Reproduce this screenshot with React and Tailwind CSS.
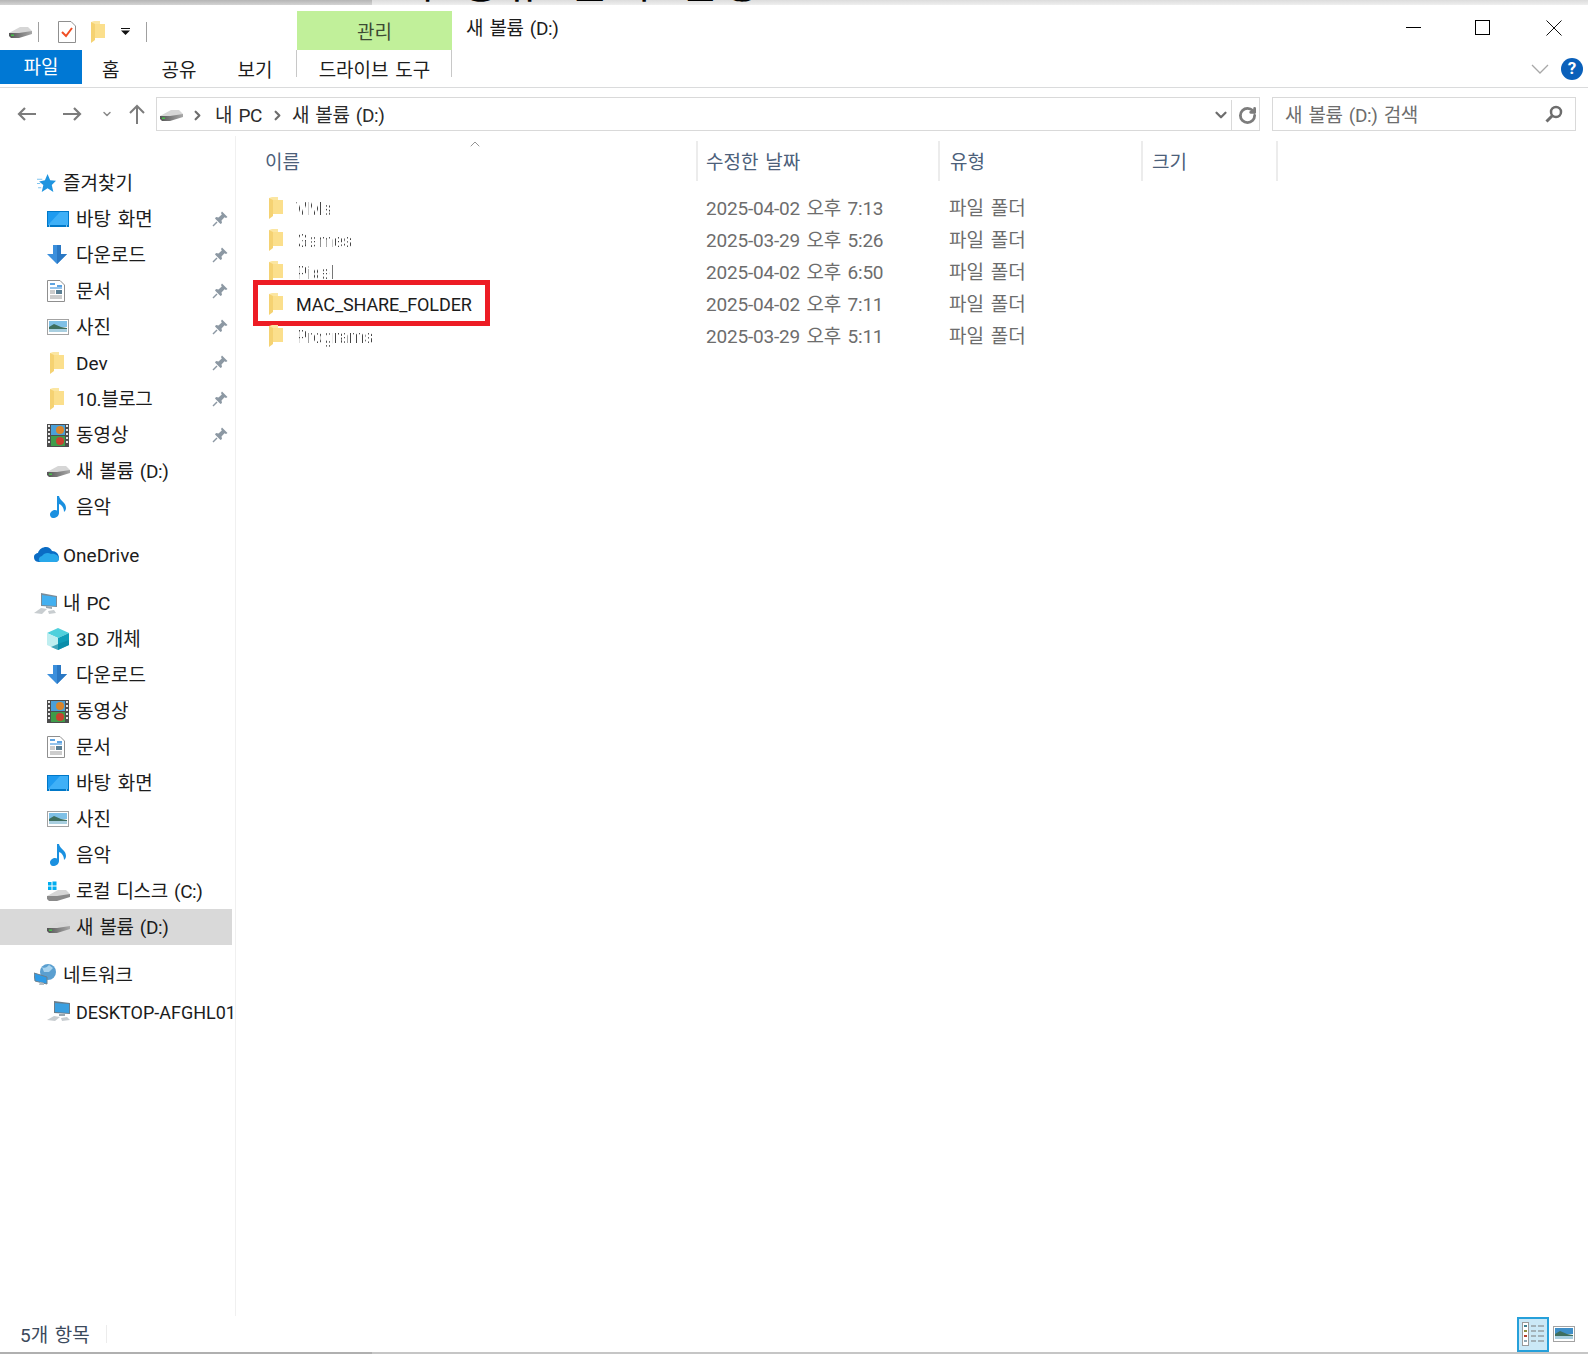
import { ChevronDown, ChevronRight, ChevronUp, RotateCw } from "lucide-react";

const HddIcon = () => (
  <svg width="23" height="12" viewBox="0 0 23 12" className="shrink-0">
    <defs>
      <linearGradient id="hddFront" x1="0" x2="1" y1="0" y2="0">
        <stop offset="0" stopColor="#555" />
        <stop offset="1" stopColor="#a8a8a8" />
      </linearGradient>
    </defs>
    <path d="M0 7 L11 1 H19 L23 5 V6 L10 8 H0 Z" fill="#d6d6d6" />
    <path d="M0 7 H10 L23 5 V8 L10 12 H2 L0 10 Z" fill="url(#hddFront)" />
    <path d="M2 8.5 h3 v1.5 h-3 z" fill="#46c24a" />
  </svg>
);

const FolderIcon = () => (
  <svg width="14" height="22" viewBox="0 0 14 22" className="shrink-0">
    <path d="M0 1 L3 0 H9 V3 H14 V17 H4 L0 17 Z" fill="#fbe6a2" />
    <path d="M0 1 L4 3 V19 L0 22 Z" fill="#f5d272" />
    <path d="M4 3 H14 V17 H4 Z" fill="#fbdf8c" />
  </svg>
);

const DesktopIcon = () => (
  <svg width="22" height="16" viewBox="0 0 22 16" className="shrink-0">
    <rect x="0" y="0" width="22" height="16" fill="#0078c8" />
    <rect x="1" y="1" width="20" height="13" fill="#1e9bf0" />
    <path d="M1 14 L13 1 H21 V14 Z" fill="#3fb0f7" />
    <path d="M2 15 h1 M19 15 h1" stroke="#fff" />
  </svg>
);

const DownloadIcon = () => (
  <svg width="20" height="20" viewBox="0 0 20 20" className="shrink-0">
    <path d="M6 0 H14 V9 H20 L10 19 L0 9 H6 Z" fill="#3b8fdc" />
    <path d="M10 0 H14 V9 H20 L10 19 Z" fill="#2a78c4" />
  </svg>
);

const DocIcon = () => (
  <svg width="18" height="22" viewBox="0 0 18 22" className="shrink-0">
    <path d="M0.5 0.5 H13 L17.5 5 V21.5 H0.5 Z" fill="#fff" stroke="#8f8f8f" />
    <path d="M3 4 h5 M10 6 h5" stroke="#2b87d8" strokeWidth="1.5" />
    <path d="M3 8 h12" stroke="#2b87d8" />
    <rect x="9" y="10" width="6" height="4" fill="#5a7f94" />
    <path d="M3 11 h5 M3 13 h5 M3 16 h12 M3 18 h12" stroke="#9a9a9a" />
  </svg>
);

const PicturesIcon = () => (
  <svg width="22" height="16" viewBox="0 0 22 16" className="shrink-0">
    <rect x="0.5" y="0.5" width="21" height="15" fill="#fff" stroke="#a3a3a3" />
    <rect x="2" y="2" width="18" height="6" fill="#7fc0e6" />
    <path d="M2 8 L7 5 L14 8 L20 9 V13 H2 Z" fill="#3f6f5f" />
    <rect x="2" y="10" width="18" height="3" fill="#a9cfe0" />
  </svg>
);

const VideoIcon = () => (
  <svg width="22" height="23" viewBox="0 0 22 23" className="shrink-0">
    <rect width="22" height="23" fill="#4d4d4d" />
    <rect x="4" y="1" width="14" height="10" fill="#4aa0d8" />
    <rect x="4" y="12" width="14" height="10" fill="#3f9c4a" />
    <circle cx="13" cy="6" r="4" fill="#d9852b" />
    <circle cx="13" cy="17" r="4" fill="#c9402f" />
    <path d="M1 2 h2 M1 6 h2 M1 10 h2 M1 14 h2 M1 18 h2 M19 2 h2 M19 6 h2 M19 10 h2 M19 14 h2 M19 18 h2" stroke="#e8e8e8" strokeWidth="2" />
  </svg>
);

const MusicIcon = () => (
  <svg width="17" height="22" viewBox="0 0 17 22" className="shrink-0">
    <path d="M7 0 H9 C10 5 16 6 16 12 C16 14 15 15 14 16 C14 12 12 9 9 8 V17 C9 20 6 22 3 22 C1 22 0 20 0 18.5 C0 16 3 14 5 14 C6 14 6.5 14.2 7 14.5 Z" fill="#1a90e0" />
  </svg>
);

const StarIcon = () => (
  <svg width="19" height="19" viewBox="0 0 18 18" className="shrink-0">
    <path d="M10 0 L12.5 6 L18 6.5 L14 10.5 L15.5 17 L10 13.5 L4.5 17 L6 10.5 L2 7 L7.5 6 Z" fill="#1f95e0" />
    <path d="M0 5 H5 M0 9 H3 M1 13 H4" stroke="#7fc4ef" />
  </svg>
);

const CloudIcon = () => (
  <svg width="25" height="16" viewBox="0 0 25 16" className="shrink-0">
    <path d="M5 15 C1 15 0 12 0 10 C0 7 3 6 4 6 C5 2 9 0 12 0 C15 0 17 2 18 4 C22 4 25 7 25 11 C25 14 23 15 21 15 Z" fill="#0a6cc4" />
    <path d="M7 15 C4 15 4 10 8 9 C10 6 14 5 17 7 C21 6 25 9 25 12 C25 14 23 15 21 15 Z" fill="#28a8ea" />
  </svg>
);

const PcIcon = () => (
  <svg width="24" height="21" viewBox="0 0 24 21" className="shrink-0">
    <path d="M7 0 L23 3 V14 L7 13 Z" fill="#7a8c99" />
    <path d="M8 2 L22 4 V13 L8 12 Z" fill="#43b0f0" />
    <path d="M12 13 L18 14 V16 L12 15 Z" fill="#9aa7b0" />
    <path d="M0 20 L7 15 L13 16 L8 21 Z" fill="#c8cdd0" />
    <path d="M14 18 L20 17 L22 20 L15 21 Z" fill="#c8cdd0" />
  </svg>
);

const CubeIcon = () => (
  <svg width="22" height="22" viewBox="0 0 22 22" className="shrink-0">
    <path d="M11 0 L22 5 L11 10 L0 5 Z" fill="#4fd0dc" />
    <path d="M0 5 L11 10 V22 L0 17 Z" fill="#bfeef0" />
    <path d="M11 10 L22 5 V17 L11 22 Z" fill="#0f9db8" />
    <path d="M11 16 L22 12 V17 L11 22 L4 19 Z" fill="#0a86a3" opacity="0.7" />
  </svg>
);

const CDriveIcon = () => (
  <svg width="23" height="20" viewBox="0 0 23 20" className="shrink-0">
    <path d="M0 15 L11 9 H19 L23 13 V14 L10 16 H0 Z" fill="#d6d6d6" />
    <path d="M0 15 H10 L23 13 V16 L10 20 H2 L0 18 Z" fill="#8a8a8a" />
    <path d="M1 1 h3.5 v3.5 h-3.5z M5.5 0.5 h4 v4 h-4z M1 5.5 h3.5 v3.5 h-3.5z M5.5 5.5 h4 v3.5 h-4z" fill="#00adef" />
  </svg>
);

const NetworkIcon = () => (
  <svg width="23" height="22" viewBox="0 0 23 22" className="shrink-0">
    <circle cx="14" cy="8" r="8" fill="#5a9fd0" />
    <path d="M8 3 C11 5 13 3 15 1 L19 4 L15 8 L10 8 Z" fill="#a8d3ee" />
    <path d="M0 9 L13 13 V20 L1 17 Z" fill="#2f9be6" stroke="#6c7f8c" />
    <path d="M6 18 L10 19 V21 L5 21 Z" fill="#b3bcc2" />
  </svg>
);

const NetPcIcon = () => (
  <svg width="24" height="20" viewBox="0 0 24 20" className="shrink-0">
    <path d="M7 0 L23 2 V13 L7 12 Z" fill="#6a7d8a" />
    <path d="M8 2 L22 3 V12 L8 11 Z" fill="#3a9fe0" />
    <path d="M12 13 L18 13 V15 L12 15 Z" fill="#9aa7b0" />
    <path d="M0 19 L7 15 L13 16 L8 20 Z" fill="#c8cdd0" />
    <path d="M14 17 L20 16 L23 19 L15 20 Z" fill="#c8cdd0" />
  </svg>
);

const PinIcon = () => (
  <svg width="16" height="16" viewBox="0 0 16 16" className="shrink-0">
    <path d="M10 0.5 L15.5 6 L14 7 L12.5 6.2 L9.5 9.5 L10 12 L8.5 13 L3 7.5 L4 6 L6.5 6.5 L9.8 3.5 L9 2 Z" fill="#8c98a3" />
    <path d="M5 11 L1 15" stroke="#8c98a3" strokeWidth="1.5" />
  </svg>
);

const items = [
  { icon: <StarIcon />, label: "즐겨찾기", top: true, inset: true },
  { icon: <DesktopIcon />, label: "바탕 화면", pin: true },
  { icon: <DownloadIcon />, label: "다운로드", pin: true },
  { icon: <DocIcon />, label: "문서", pin: true },
  { icon: <PicturesIcon />, label: "사진", pin: true },
  { icon: <FolderIcon />, label: "Dev", pin: true, inset: true },
  { icon: <FolderIcon />, label: "10.블로그", pin: true, inset: true, tight: true },
  { icon: <VideoIcon />, label: "동영상", pin: true },
  { icon: <HddIcon />, label: "새 볼륨 (D:)", tight: true },
  { icon: <MusicIcon />, label: "음악", inset: true },
  { icon: <CloudIcon />, label: "OneDrive", top: true, gap: true },
  { icon: <PcIcon />, label: "내 PC", top: true, gap: true, tight: true },
  { icon: <CubeIcon />, label: "3D 개체" },
  { icon: <DownloadIcon />, label: "다운로드" },
  { icon: <VideoIcon />, label: "동영상" },
  { icon: <DocIcon />, label: "문서" },
  { icon: <DesktopIcon />, label: "바탕 화면" },
  { icon: <PicturesIcon />, label: "사진" },
  { icon: <MusicIcon />, label: "음악", inset: true },
  { icon: <CDriveIcon />, label: "로컬 디스크 (C:)", tight: true },
  { icon: <HddIcon />, label: "새 볼륨 (D:)", selected: true, tight: true },
  { icon: <NetworkIcon />, label: "네트워크", top: true, gap: true },
  { icon: <NetPcIcon />, label: "DESKTOP-AFGHL01", latin: true },
];

const files = [
  { name: "VMs", date: "2025-04-02 오후 7:13", hidden: true },
  { name: "Games", date: "2025-03-29 오후 5:26", hidden: true },
  { name: "Pixel", date: "2025-04-02 오후 6:50", hidden: true },
  { name: "MAC_SHARE_FOLDER", date: "2025-04-02 오후 7:11", marked: true },
  { name: "Programs", date: "2025-03-29 오후 5:11", hidden: true },
];

const SidebarRow = ({ item }) => (
  <div
    className={`flex h-[36px] w-[232px] items-center ${item.top ? "pl-[34px]" : "pl-[47px]"} ${item.gap ? "mt-[12px]" : ""} ${item.selected ? "bg-[#d9d9d9]" : ""}`}
  >
    <span className={`flex shrink-0 items-center ${item.top ? "w-[29px]" : "w-[29px]"} ${item.inset ? "pl-[3px]" : ""}`}>{item.icon}</span>
    <span className={`whitespace-nowrap pt-[2px] ${item.tight ? "tracking-[-0.4px]" : ""} ${item.latin ? "text-[18px]" : ""}`}>{item.label}</span>
    {item.pin && (
      <span className="ml-auto mr-[4px]">
        <PinIcon />
      </span>
    )}
  </div>
);

export default function App() {
  return (
    <div
      className="flex h-[1354px] w-full flex-col overflow-hidden bg-white text-[19px] text-[#1c1c1c] [word-spacing:2px]"
      style={{ fontFamily: 'Roboto, "Noto Sans CJK KR", sans-serif' }}
    >
      {/* clipped window behind */}
      <div className="flex h-[5px] shrink-0 overflow-hidden">
        <div className="h-full w-[372px] bg-gradient-to-b from-[#b5b5b5] to-[#d4d4d4]" />
        <div className="h-full flex-1 bg-gradient-to-b from-[#dcdcdc] to-[#efefef] pl-[24px]">
          <div className="mt-[-37px] whitespace-nowrap text-[41px] leading-[42px] tracking-[5px] text-black [word-spacing:8px]">맥 공유 폴더 설정</div>
        </div>
      </div>

      {/* title bar */}
      <div className="flex h-[45px] shrink-0">
        <div className="flex w-[297px] items-center pt-[8px]">
          <span className="ml-[9px]"><HddIcon /></span>
          <span className="ml-[6px] h-[20px] w-px bg-[#a0a0a0]" />
          <svg width="18" height="22" viewBox="0 0 18 22" className="ml-[19px] shrink-0">
            <path d="M0.5 0.5 H13 L17.5 5 V21.5 H0.5 Z" fill="#fff" stroke="#8f8f8f" />
            <path d="M4 11 L8 15 L14 7" fill="none" stroke="#f04e23" strokeWidth="2" />
          </svg>
          <span className="ml-[15px]"><FolderIcon /></span>
          <svg width="9" height="7" viewBox="0 0 9 7" className="ml-[16px] shrink-0">
            <path d="M0 0 H9 V1 H0 Z M0 2.5 H9 L4.5 7 Z" fill="#111" />
          </svg>
          <span className="ml-[16px] h-[20px] w-px bg-[#a0a0a0]" />
        </div>
        <div className="mt-[6px] flex h-[39px] w-[155px] items-center justify-center bg-[#c1f09a] pt-[5px] text-[#3c4a34]">관리</div>
        <div className="ml-[14px] flex items-center pt-[4px] tracking-[-0.4px] text-[#1c1c1c]">새 볼륨 (D:)</div>
        <div className="ml-auto flex items-start pt-[15px]">
          <span className="mt-[7px] h-px w-[15px] bg-black" />
          <span className="ml-[54px] h-[15px] w-[15px] border border-black" />
          <svg width="16" height="16" viewBox="0 0 16 16" className="ml-[56px] mr-[26px] shrink-0">
            <path d="M0.5 0.5 L15.5 15.5 M15.5 0.5 L0.5 15.5" stroke="#111" />
          </svg>
        </div>
      </div>

      {/* ribbon tabs */}
      <div className="flex h-[38px] shrink-0 items-start border-b border-[#dadbdc]">
        <div className="flex h-[34px] w-[82px] items-center justify-center bg-[#0078d4] pt-[2px] text-white">파일</div>
        <div className="flex h-[37px] items-center pl-[20px] pt-[5px]">홈</div>
        <div className="flex h-[37px] items-center pl-[42px] pt-[5px]">공유</div>
        <div className="flex h-[37px] items-center pl-[41px] pt-[5px]">보기</div>
        <div className="ml-[24px] flex h-[27px] w-[156px] items-start justify-center border-x border-[#c8c8c8] text-[#1c1c1c]">
          <span className="mt-[8px] leading-[26px]">드라이브 도구</span>
        </div>
        <div className="ml-auto flex h-[37px] items-center pr-[5px]">
          <svg width="18" height="10" viewBox="0 0 18 10" className="mr-[12px] shrink-0">
            <path d="M1 1 L9 9 L17 1" fill="none" stroke="#a8a8a8" strokeWidth="1.3" />
          </svg>
          <div className="flex h-[22px] w-[22px] items-center justify-center rounded-full bg-[#0a60ba] text-[17px] font-bold text-white">?</div>
        </div>
      </div>

      {/* address row */}
      <div className="flex h-[48px] shrink-0 items-start pt-[9px]">
        <div className="flex h-[33px] w-[156px] items-center">
          <svg width="20" height="16" viewBox="0 0 20 16" className="ml-[17px] shrink-0">
            <path d="M19 8 H2 M8 2 L2 8 L8 14" fill="none" stroke="#7c7c7c" strokeWidth="2.2" />
          </svg>
          <svg width="20" height="16" viewBox="0 0 20 16" className="ml-[25px] shrink-0">
            <path d="M1 8 H18 M12 2 L18 8 L12 14" fill="none" stroke="#7c7c7c" strokeWidth="2.2" />
          </svg>
          <ChevronDown size={12} strokeWidth={3} className="ml-[19px] text-[#8a8a8a]" />
          <svg width="16" height="20" viewBox="0 0 16 20" className="ml-[16px] shrink-0">
            <path d="M8 20 V2 M1 9 L8 2 L15 9" fill="none" stroke="#7c7c7c" strokeWidth="2" />
          </svg>
        </div>
        <div className="flex h-[34px] w-[1104px] items-center border border-[#d9d9d9] pl-[3px] pt-[2px]">
          <HddIcon />
          <ChevronRight size={15} strokeWidth={3.5} className="ml-[7px] text-[#6d6d6d]" />
          <span className="ml-[10px] pt-[2px] tracking-[-0.4px] text-[#2b2b2b]">내 PC</span>
          <ChevronRight size={15} strokeWidth={3.5} className="ml-[8px] text-[#6d6d6d]" />
          <span className="ml-[7px] pt-[2px] tracking-[-0.4px] text-[#2b2b2b]">새 볼륨 (D:)</span>
          <ChevronDown size={18} strokeWidth={3} className="ml-auto mr-[1px] text-[#6d6d6d]" />
          <div className="flex h-full w-[28px] items-center justify-center border-l border-[#d9d9d9] pl-[3px]">
            <RotateCw size={19} strokeWidth={3.5} className="text-[#7c7c7c]" />
          </div>
        </div>
        <div className="ml-[12px] flex h-[34px] w-[304px] items-center border border-[#d9d9d9] pl-[12px] pr-[12px] text-[#6d6d6d]">
          <span className="pt-[4px] tracking-[-0.4px]">새 볼륨 (D:) 검색</span>
          <svg width="18" height="18" viewBox="0 0 18 18" className="ml-auto shrink-0">
            <circle cx="11" cy="7" r="5" fill="none" stroke="#6d6d6d" strokeWidth="2.5" />
            <path d="M7 11 L1.5 16.5" stroke="#6d6d6d" strokeWidth="3" />
          </svg>
        </div>
      </div>

      {/* main */}
      <div className="flex min-h-0 flex-1">
        <div className="w-[236px] shrink-0 border-r border-[#f0f0f0] pt-[29px]">
          {items.map((item, i) => (
            <SidebarRow key={i} item={item} />
          ))}
        </div>
        <div className="min-w-0 flex-1 pt-[5px]">
          <div className="grid h-[40px] grid-cols-[460px_242px_203px_137px] text-[#4c607a]">
            <div className="relative flex items-center pl-[29px] pt-[4px]">
              이름
              <ChevronUp size={16} strokeWidth={1.2} className="absolute left-[231px] top-[-5px] text-[#7a7a7a]" />
            </div>
            <div className="flex items-center border-l-2 border-[#ececec] pl-[8px] pt-[4px]">수정한 날짜</div>
            <div className="flex items-center border-l-2 border-[#ececec] pl-[10px] pt-[4px]">유형</div>
            <div className="flex items-center border-x-2 border-[#ececec] pl-[9px] pt-[4px]">크기</div>
          </div>
          <div className="mt-[11px]">
            {files.map((file) => (
              <div key={file.name} className="grid h-[32px] grid-cols-[460px_242px_203px] items-center text-[#6d6d6d]">
                <div className="relative flex h-full items-center pl-[33px] text-[#1c1c1c]">
                  <FolderIcon />
                  <span
                    className={`ml-[13px] whitespace-nowrap text-[18px] tracking-[-0.1px] ${file.hidden ? "bg-[repeating-linear-gradient(90deg,#444_0px,#444_1px,transparent_1px,transparent_3px)] bg-clip-text text-transparent" : ""}`}
                  >
                    {file.name}
                  </span>
                  {file.marked && (
                    <div className="absolute left-[17px] top-[-8px] h-[46px] w-[237px] border-[5px] border-[#ed1c24]" />
                  )}
                </div>
                <div className="pl-[10px] pt-[2px] tracking-[-0.2px]">{file.date}</div>
                <div className="pl-[11px] pt-[2px]">파일 폴더</div>
              </div>
            ))}
          </div>
        </div>
      </div>

      {/* status bar */}
      <div className="flex h-[36px] shrink-0 items-center pl-[20px]">
        <span className="pt-[4px] text-[#3c4a5c]">5개 항목</span>
        <span className="ml-[16px] h-[18px] w-px bg-[#ececec]" />
        <div className="ml-auto flex items-center pr-[13px]">
          <div className="flex h-[35px] w-[32px] flex-col items-center justify-center gap-[1px] border-2 border-[#26a0da] bg-[#cbe8f6]">
            <svg width="22" height="24" viewBox="0 0 22 24">
              <rect x="0.5" y="0.5" width="6" height="23" fill="#fff" stroke="#9a9a9a" />
              <path d="M2 3 h3 v2 h-3z" fill="#3f7f8f" />
              <path d="M2 8 h3 v2 h-3z" fill="#8c8c3f" />
              <path d="M2 13 h3 v2 h-3z" fill="#b5402f" />
              <path d="M2 18 h3 v2 h-3z" fill="#8fa8b5" />
              <path d="M9 4 h5 M16 4 h6 M9 9 h5 M16 9 h6 M9 14 h5 M16 14 h6 M9 19 h5 M16 19 h6" stroke="#7a7a7a" />
            </svg>
          </div>
          <svg width="22" height="16" viewBox="0 0 22 16" className="ml-[4px] shrink-0">
            <rect x="0.5" y="0.5" width="21" height="15" fill="#fff" stroke="#a3a3a3" />
            <rect x="2" y="2" width="18" height="6" fill="#3f8fc8" />
            <path d="M2 8 L7 5 L14 8 L20 9 V13 H2 Z" fill="#3f6f5f" />
            <rect x="2" y="10" width="18" height="3" fill="#a9cfe0" />
          </svg>
        </div>
      </div>

      {/* bottom edge */}
      <div className="flex h-[2px] shrink-0">
        <div className="h-full w-[372px] bg-[#b0b0b0]" />
        <div className="h-full flex-1 bg-[#c6c6c6]" />
      </div>
    </div>
  );
}
